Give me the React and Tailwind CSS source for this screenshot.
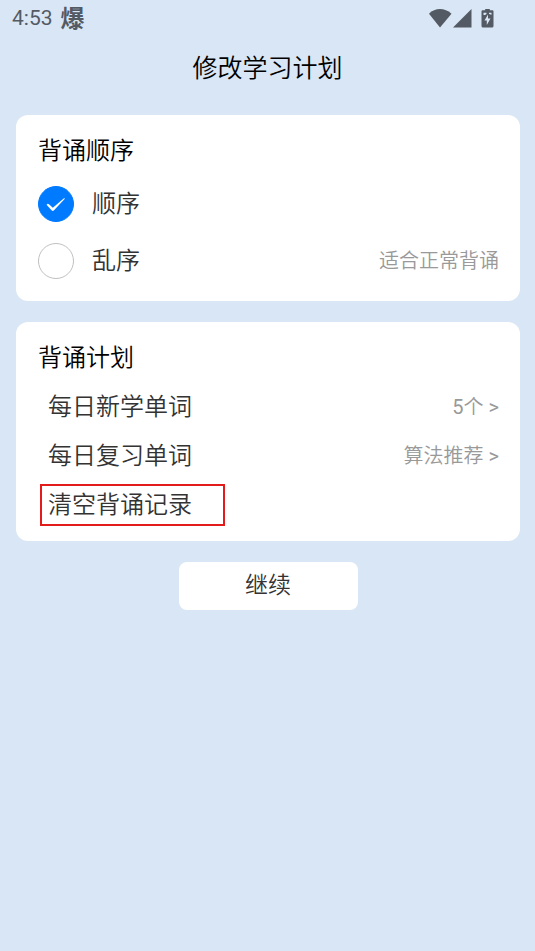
import React, { useState } from 'react';

const orderOptions = [
  { value: 'sequence', label: '顺序', hint: '' },
  { value: 'shuffle', label: '乱序', hint: '适合正常背诵' }
];

const planItems = [
  { label: '每日新学单词', count: 5, value: '个' },
  { label: '每日复习单词', value: '算法推荐' }
];

const StatusBar = () => (
  <div className="flex h-[38px] items-center justify-between pl-3 pr-10 text-[#535a63]">
    <div className="flex items-center gap-2">
      <span className="text-[21px] font-normal">4:53</span>
      <span className="text-2xl leading-6 font-bold">爆</span>
    </div>
    <div className="flex h-9 items-center" aria-hidden="true">
      <svg width="24" height="20" viewBox="0 0 24 20" fill="currentColor">
        <path d="M11 18.500 0 4.700C3 1.500 7 0 11 0s8 1.500 11.500 4.700z" />
      </svg>
      <svg width="20" height="20" viewBox="0 0 20 20" fill="currentColor">
        <path d="M18.500 0v18.500H0z" />
      </svg>
      <svg className="ml-2" width="14" height="20" viewBox="0 0 14 20">
        <path
          fill="currentColor"
          d="M4.200 0h4.600v1.300h2.500A1.200 1.200 0 0 1 12.500 2.500v14.500A1.500 1.500 0 0 1 11 18.500H2a1.500 1.500 0 0 1-1.500-1.500V2.500A1.200 1.200 0 0 1 1.700 1.300h2.500z"
        />
        <path fill="#d9e6f5" d="M7 5.500v4h2.500L5.800 16v-4.500H3.500z" />
        <path fill="#d9e6f5" d="M2.500 3.800h3v1.300l-1.500.9H2.500zM8 3.800h2.500v2L8 5.100z" />
      </svg>
    </div>
  </div>
);

const Card = ({ title, children }) => (
  <section className="rounded-xl bg-white pt-3 pr-[21px] pb-3 pl-[22px]">
    <h2 className="flex h-12 items-center text-2xl text-black">{title}</h2>
    {children}
  </section>
);

const OrderOption = ({ option, checked, onSelect }) => (
  <label className="flex h-[57px] cursor-pointer items-center">
    <span className="relative size-9">
      <input
        type="radio"
        name="order"
        value={option.value}
        checked={checked}
        onChange={onSelect}
        className="block size-9 appearance-none rounded-full border border-[#c0c0c0] bg-white checked:border-[#007aff] checked:bg-[#007aff]"
      />
      {checked && (
        <svg className="pointer-events-none absolute inset-0" width="36" height="36" viewBox="0 0 36 36" fill="white">
          <path d="M8.800 18.300c.6-.9 1.500-.7 2.200 0l3.800 3.500L26 12.300c.6-.3 1 .1.600.7L15.800 24.400c-.7.7-1.400.6-2 0l-4.600-4.800c-.4-.4-.6-.8-.4-1.300z" />
        </svg>
      )}
    </span>
    <span className="ml-[18px] text-2xl">{option.label}</span>
    <span className="ml-auto text-xl text-[#999999]">{option.hint}</span>
  </label>
);

const App = () => {
  const [order, setOrder] = useState('sequence');

  return (
    <div className="min-h-screen bg-[#d9e6f5] font-['Roboto','Noto_Sans_CJK_SC',sans-serif] font-[350] text-[#333333]">
      <StatusBar />
      <header className="flex h-[77px] items-start justify-center pt-[11px]">
        <h1 className="text-[25px] leading-10 font-[350] text-black">修改学习计划</h1>
      </header>

      <main className="flex flex-col gap-[21px] pr-[15px] pl-4">
        <Card title="背诵顺序">
          {orderOptions.map(option => (
            <OrderOption
              key={option.value}
              option={option}
              checked={order === option.value}
              onSelect={() => setOrder(option.value)}
            />
          ))}
        </Card>

        <Card title="背诵计划">
          {planItems.map(item => (
            <button key={item.label} type="button" className="flex h-[49px] w-full items-center justify-between pl-[10px]">
              <span className="text-2xl">{item.label}</span>
              <span className="text-xl text-[#999999]">
                <span className="font-normal">{item.count}</span>
                {item.value}
                <span className="font-normal"> &gt;</span>
              </span>
            </button>
          ))}
          <div className="flex h-[49px] items-center pl-0.5">
            <button type="button" className="h-[42px] w-[185px] border-2 border-[#e31b1b] px-1.5 text-left text-2xl">
              清空背诵记录
            </button>
          </div>
        </Card>

        <button type="button" className="h-12 w-[179px] self-center rounded-lg bg-white text-[23px]">
          继续
        </button>
      </main>
    </div>
  );
};

export default App;
